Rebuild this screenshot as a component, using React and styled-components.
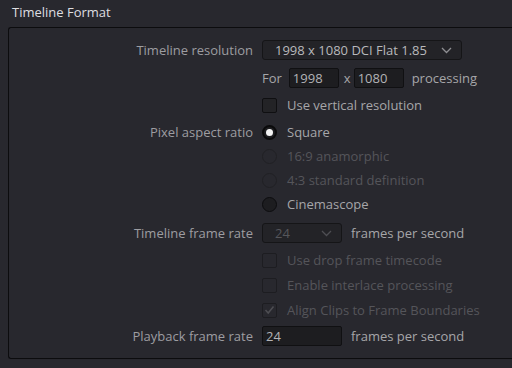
import React from "react";
import styled, { createGlobalStyle } from "styled-components";

const Global = createGlobalStyle`
  html, body {
    margin: 0;
    padding: 0;
    background: #28282e;
  }
  body {
    font-family: "Open Sans", "Noto Sans", sans-serif;
    font-size: 13px;
    color: #a3a3a6;
  }
`;

const Page = styled.div`
  width: 512px;
  height: 368px;
  overflow: hidden;
  background: #28282e;
`;

const Title = styled.div`
  height: 27px;
  padding-left: 12px;
  line-height: 24px;
  color: #dedee0;
  font-size: 13px;
`;

const Panel = styled.div`
  margin-left: 8px;
  width: 520px;
  height: 332px;
  border: 1px solid #0c0c0e;
  border-right: none;
  border-radius: 3px 0 0 3px;
  padding-top: 10px;
  box-sizing: border-box;
`;

const Row = styled.div`
  display: grid;
  grid-template-columns: 244px 1fr;
  column-gap: 9px;
  align-items: center;
  height: 24px;
  margin-top: ${(p) => p.$gap || 0}px;
`;

const Label = styled.div`
  text-align: right;
  color: #9d9da1;
  white-space: nowrap;
`;

const Controls = styled.div`
  display: flex;
  align-items: center;
  white-space: nowrap;
  color: ${(p) => (p.$disabled ? "#55555a" : "#a6a6a9")};
`;

const Select = styled.div`
  box-sizing: border-box;
  width: ${(p) => p.$w}px;
  height: 20px;
  display: flex;
  align-items: center;
  justify-content: space-between;
  padding: 0 9px 0 12px;
  background: #232327;
  border: 1px solid #151517;
  border-radius: 3px;
  color: ${(p) => (p.$disabled ? "#56565b" : "#b9b9bc")};
`;

const Field = styled.div`
  box-sizing: border-box;
  width: ${(p) => p.$w}px;
  height: 20px;
  line-height: 18px;
  padding-left: 3px;
  background: #1d1d20;
  border: 1px solid #101012;
  border-radius: 2px;
  color: #b3b3b6;
`;

const Text = styled.span`
  margin: 0 ${(p) => p.$mr || 0}px 0 ${(p) => p.$ml || 0}px;
`;

const Box = styled.span`
  box-sizing: border-box;
  width: 15px;
  height: 15px;
  border-radius: 2px;
  margin-right: 10px;
  display: inline-flex;
  align-items: center;
  justify-content: center;
  background: ${(p) => (p.$disabled ? "transparent" : "#232326")};
  border: 1px solid ${(p) => (p.$disabled ? "#1d1d21" : "#0f0f11")};
`;

const Radio = styled.span`
  box-sizing: border-box;
  width: 15px;
  height: 15px;
  border-radius: 50%;
  margin-right: 10px;
  display: inline-flex;
  align-items: center;
  justify-content: center;
  background: ${(p) => (p.$disabled ? "transparent" : "#1d1d20")};
  border: 1px solid ${(p) => (p.$disabled ? "#202024" : "#0c0c0e")};
  ${(p) => p.$on && "border: 2px solid #0a0a0b; background: #1d1d20;"}
`;

const Dot = styled.span`
  width: 7px;
  height: 7px;
  border-radius: 50%;
  background: #f2f2f2;
`;

const Chevron = ({ color }) => (
  <svg width="11" height="7" viewBox="0 0 11 7">
    <polyline points="1,1 5.5,5.5 10,1" fill="none" stroke={color} strokeWidth="1.3" />
  </svg>
);

const Check = () => (
  <svg width="11" height="10" viewBox="0 0 11 10">
    <polyline points="1.5,5 4.2,8 9.5,1.5" fill="none" stroke="#4e4e53" strokeWidth="1.5" />
  </svg>
);

export default function App() {
  return (
    <Page>
      <Global />
      <Title>Timeline Format</Title>
      <Panel>
        <Row>
          <Label>Timeline resolution</Label>
          <Controls>
            <Select $w={200}>
              <span>1998 x 1080 DCI Flat 1.85</span>
              <Chevron color="#8e8e92" />
            </Select>
          </Controls>
        </Row>
        <Row $gap={4}>
          <div />
          <Controls>
            <Text $mr={7}>For</Text>
            <Field $w={50}>1998</Field>
            <Text $ml={5} $mr={3}>x</Text>
            <Field $w={50}>1080</Field>
            <Text $ml={8}>processing</Text>
          </Controls>
        </Row>
        <Row $gap={3}>
          <div />
          <Controls>
            <Box />
            Use vertical resolution
          </Controls>
        </Row>
        <Row $gap={3}>
          <Label>Pixel aspect ratio</Label>
          <Controls>
            <Radio $on>
              <Dot />
            </Radio>
            Square
          </Controls>
        </Row>
        <Row>
          <div />
          <Controls $disabled>
            <Radio $disabled />
            16:9 anamorphic
          </Controls>
        </Row>
        <Row>
          <div />
          <Controls $disabled>
            <Radio $disabled />
            4:3 standard definition
          </Controls>
        </Row>
        <Row>
          <div />
          <Controls>
            <Radio />
            Cinemascope
          </Controls>
        </Row>
        <Row $gap={5}>
          <Label>Timeline frame rate</Label>
          <Controls>
            <Select $w={80} $disabled>
              <span>24</span>
              <Chevron color="#4e4e53" />
            </Select>
            <Text $ml={9}>frames per second</Text>
          </Controls>
        </Row>
        <Row $gap={3}>
          <div />
          <Controls $disabled>
            <Box $disabled />
            Use drop frame timecode
          </Controls>
        </Row>
        <Row $gap={1}>
          <div />
          <Controls $disabled>
            <Box $disabled />
            Enable interlace processing
          </Controls>
        </Row>
        <Row $gap={1}>
          <div />
          <Controls $disabled>
            <Box $disabled>
              <Check />
            </Box>
            Align Clips to Frame Boundaries
          </Controls>
        </Row>
        <Row $gap={2}>
          <Label>Playback frame rate</Label>
          <Controls>
            <Field $w={80}>24</Field>
            <Text $ml={9}>frames per second</Text>
          </Controls>
        </Row>
      </Panel>
    </Page>
  );
}
